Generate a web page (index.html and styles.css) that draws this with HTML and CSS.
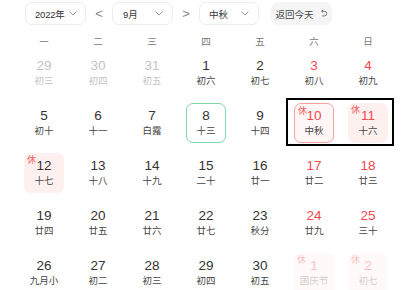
FILE: index.html
```html
<!DOCTYPE html>
<html lang="zh">
<head>
<meta charset="utf-8">
<link rel="stylesheet" href="styles.css">
</head>
<body>
<div class="cal">
  <div class="toolbar">
    <div class="select sel-year"><span>2022年</span><svg class="chev" viewBox="0 0 8 5" width="8" height="5"><polyline points="0.5,0.5 4,4 7.5,0.5"/></svg></div>
    <span class="arrow">&lt;</span>
    <div class="select sel-month"><span>9月</span><svg class="chev" viewBox="0 0 8 5" width="8" height="5"><polyline points="0.5,0.5 4,4 7.5,0.5"/></svg></div>
    <span class="arrow">&gt;</span>
    <div class="select sel-hol"><span>中秋</span><svg class="chev" viewBox="0 0 8 5" width="8" height="5"><polyline points="0.5,0.5 4,4 7.5,0.5"/></svg></div>
    <div class="btn-today"><span>返回今天</span><svg class="back" viewBox="0 0 10 10" width="9" height="9"><path d="M3 2.5 H6 A2.6 2.6 0 0 1 6 7.7 H3.5"/><polyline points="4.6,1 3,2.5 4.6,4"/></svg></div>
  </div>
  <div class="weekdays">
    <span>一</span><span>二</span><span>三</span><span>四</span><span>五</span><span>六</span><span>日</span>
  </div>
  <div class="grid">
    <div class="cell other"><b>29</b><i>初三</i></div>
    <div class="cell other"><b>30</b><i>初四</i></div>
    <div class="cell other"><b>31</b><i>初五</i></div>
    <div class="cell"><b>1</b><i>初六</i></div>
    <div class="cell"><b>2</b><i>初七</i></div>
    <div class="cell wk"><b>3</b><i>初八</i></div>
    <div class="cell wk"><b>4</b><i>初九</i></div>

    <div class="cell"><b>5</b><i>初十</i></div>
    <div class="cell"><b>6</b><i>十一</i></div>
    <div class="cell"><b>7</b><i>白露</i></div>
    <div class="cell today"><b>8</b><i>十三</i></div>
    <div class="cell"><b>9</b><i>十四</i></div>
    <div class="cell rest selected wk"><em>休</em><b>10</b><i>中秋</i></div>
    <div class="cell rest wk"><em>休</em><b>11</b><i>十六</i></div>

    <div class="cell rest"><em>休</em><b>12</b><i>十七</i></div>
    <div class="cell"><b>13</b><i>十八</i></div>
    <div class="cell"><b>14</b><i>十九</i></div>
    <div class="cell"><b>15</b><i>二十</i></div>
    <div class="cell"><b>16</b><i>廿一</i></div>
    <div class="cell wk"><b>17</b><i>廿二</i></div>
    <div class="cell wk"><b>18</b><i>廿三</i></div>

    <div class="cell"><b>19</b><i>廿四</i></div>
    <div class="cell"><b>20</b><i>廿五</i></div>
    <div class="cell"><b>21</b><i>廿六</i></div>
    <div class="cell"><b>22</b><i>廿七</i></div>
    <div class="cell"><b>23</b><i>秋分</i></div>
    <div class="cell wk"><b>24</b><i>廿九</i></div>
    <div class="cell wk"><b>25</b><i>三十</i></div>

    <div class="cell"><b>26</b><i>九月小</i></div>
    <div class="cell"><b>27</b><i>初二</i></div>
    <div class="cell"><b>28</b><i>初三</i></div>
    <div class="cell"><b>29</b><i>初四</i></div>
    <div class="cell"><b>30</b><i>初五</i></div>
    <div class="cell rest next"><em>休</em><b>1</b><i>国庆节</i></div>
    <div class="cell rest next"><em>休</em><b>2</b><i>初七</i></div>

    <div class="range"></div>
  </div>
</div>
</body>
</html>
```
FILE: styles.css
```css
* { box-sizing: border-box; }
html, body { margin: 0; padding: 0; background: #fff; }
body {
  font-family: "Liberation Sans", "Noto Sans CJK SC", sans-serif;
  color: #333;
  width: 415px;
  height: 290px;
  overflow: hidden;
}
.cal { padding: 2px 0 0 25px; }
.toolbar {
  display: flex;
  align-items: center;
  height: 23px;
}
.select {
  width: 61px;
  height: 23px;
  border: 1px solid #ececec;
  border-radius: 7px;
  display: flex;
  align-items: center;
  justify-content: space-between;
  padding: 0 9px 0 10px;
  font-size: 9.5px;
  color: #333;
  white-space: nowrap;
}
.sel-year { padding: 0 8px 0 9px; letter-spacing: -0.2px; }
.chev { fill: none; stroke: #999; stroke-width: 1; flex: none; }
.arrow {
  width: 26px;
  text-align: center;
  font-size: 13px;
  color: #888;
}
.sel-hol { width: 60px; padding-left: 9px; }
.btn-today {
  margin-left: 12px;
  width: 61px;
  height: 23px;
  border-radius: 7px;
  background: #f5f5f5;
  display: flex;
  align-items: center;
  justify-content: center;
  gap: 5px;
  font-size: 9.5px;
  color: #444;
  white-space: nowrap;
}
.back { fill: none; stroke: #666; stroke-width: 1; flex: none; }
.weekdays {
  display: grid;
  grid-template-columns: repeat(7, 40px);
  column-gap: 14px;
  margin-left: -1px;
  height: 28px;
  align-items: center;
  padding-top: 4px;
  font-size: 9.5px;
  color: #777;
  text-align: center;
}
.grid {
  position: relative;
  display: grid;
  grid-template-columns: repeat(7, 40px);
  grid-auto-rows: 40px;
  column-gap: 14px;
  row-gap: 10px;
  margin-left: -1px;
}
.cell {
  position: relative;
  border-radius: 7px;
  display: flex;
  flex-direction: column;
  align-items: center;
  justify-content: center;
  padding-bottom: 1px;
}
.cell b {
  font-weight: normal;
  font-size: 13.5px;
  line-height: 16px;
  color: #333;
}
.cell i {
  font-style: normal;
  font-size: 9.5px;
  line-height: 13px;
  color: #444;
}
.cell em {
  position: absolute;
  top: 2px;
  left: 3px;
  font-style: normal;
  font-size: 9px;
  line-height: 10px;
  color: #f56262;
}
.cell.other b, .cell.other i { color: #c4c4c4; }
.cell.wk b { color: #f5474e; }
.cell.today { border: 1.5px solid #7fd7a7; }
.cell.rest { background: #fff0f0; }
.cell.selected { border: 1.5px solid #f7a0a0; background: #fff6f6; }
.cell.next { background: #fff9f9; }
.cell.next b { color: #f9c2c2; }
.cell.next i { color: #cfcfcf; }
.cell.next em { color: #f9c2c2; }
.range {
  position: absolute;
  left: 262px;
  top: 45px;
  width: 108px;
  height: 48px;
  border: 2px solid #000;
  pointer-events: none;
}
```
